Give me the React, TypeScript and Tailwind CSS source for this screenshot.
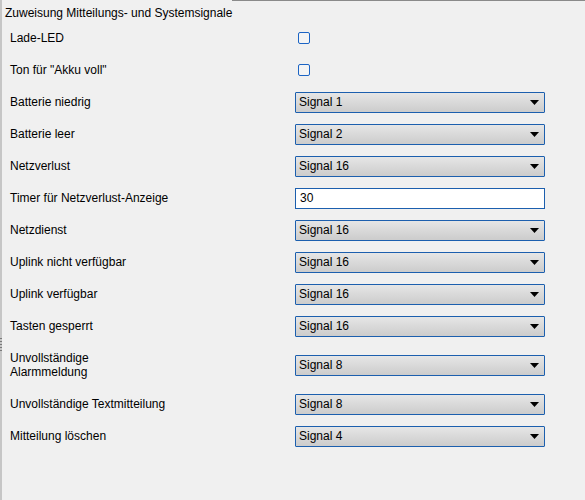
type Row =
  | { label: string[]; kind: "check" }
  | { label: string[]; kind: "select"; value: string }
  | { label: string[]; kind: "text"; value: string };

const rows: Row[] = [
  { label: ["Lade-LED"], kind: "check" },
  { label: ['Ton für "Akku voll"'], kind: "check" },
  { label: ["Batterie niedrig"], kind: "select", value: "Signal 1" },
  { label: ["Batterie leer"], kind: "select", value: "Signal 2" },
  { label: ["Netzverlust"], kind: "select", value: "Signal 16" },
  { label: ["Timer für Netzverlust-Anzeige"], kind: "text", value: "30" },
  { label: ["Netzdienst"], kind: "select", value: "Signal 16" },
  { label: ["Uplink nicht verfügbar"], kind: "select", value: "Signal 16" },
  { label: ["Uplink verfügbar"], kind: "select", value: "Signal 16" },
  { label: ["Tasten gesperrt"], kind: "select", value: "Signal 16" },
  { label: ["Unvollständige", "Alarmmeldung"], kind: "select", value: "Signal 8" },
  { label: ["Unvollständige Textmitteilung"], kind: "select", value: "Signal 8" },
  { label: ["Mitteilung löschen"], kind: "select", value: "Signal 4" },
];

function Dropdown({ value }: { value: string }) {
  return (
    <div className="flex h-[21px] w-[250px] items-center justify-between rounded-[1px] border border-[#1c5fae] bg-gradient-to-b from-[#e6e6e6] to-[#cccccc] pl-[3px] pr-[5px]">
      <span className="leading-[14px]">{value}</span>
      <svg width="9" height="5" viewBox="0 0 9 5">
        <path d="M0 0H9L4.5 5Z" fill="#000" />
      </svg>
    </div>
  );
}

function Control({ row }: { row: Row }) {
  if (row.kind === "check") {
    return (
      <div className="ml-[3px] h-[12px] w-[12px] rounded-[2px] border border-[#1c64c4] bg-[#f4f4f4]" />
    );
  }
  if (row.kind === "text") {
    return (
      <div className="flex h-[21px] w-[250px] items-center border border-[#1c5fae] bg-white pl-[4px]">
        <span className="leading-[14px]">{row.value}</span>
      </div>
    );
  }
  return <Dropdown value={row.value} />;
}

export default function App() {
  return (
    <div
      className="flex h-[500px] w-[585px] bg-[#f0f0f0] text-[12px] text-black"
      style={{ fontFamily: '"Liberation Sans", Arial, sans-serif' }}
    >
      {/* splitter strip on the left */}
      <div className="relative w-[2px] shrink-0 bg-[#c6c6c6]">
        <div className="absolute left-0 top-[338px] flex flex-col gap-[2px]">
          {[0, 1, 2, 3, 4].map((i) => (
            <div key={i} className="h-[1px] w-[2px] bg-[#7a7a7a]" />
          ))}
        </div>
      </div>

      <div className="flex flex-1 flex-col">
        <div className="flex h-[22px]">
          <div className="pl-[3px] pt-[6px] leading-[14px]">
            Zuweisung Mitteilungs- und Systemsignale
          </div>
          <div className="h-[1px] flex-1 bg-[#8a8a8a]" />
        </div>

        {rows.map((row) => (
          <div
            key={row.label.join(" ")}
            className={`flex items-center ${row.label.length > 1 ? "h-[46px]" : "h-[32px]"}`}
          >
            <div className="w-[293px] shrink-0 pl-[8px] leading-[14px]">
              {row.label.map((line) => (
                <div key={line}>{line}</div>
              ))}
            </div>
            <Control row={row} />
          </div>
        ))}
      </div>
    </div>
  );
}
